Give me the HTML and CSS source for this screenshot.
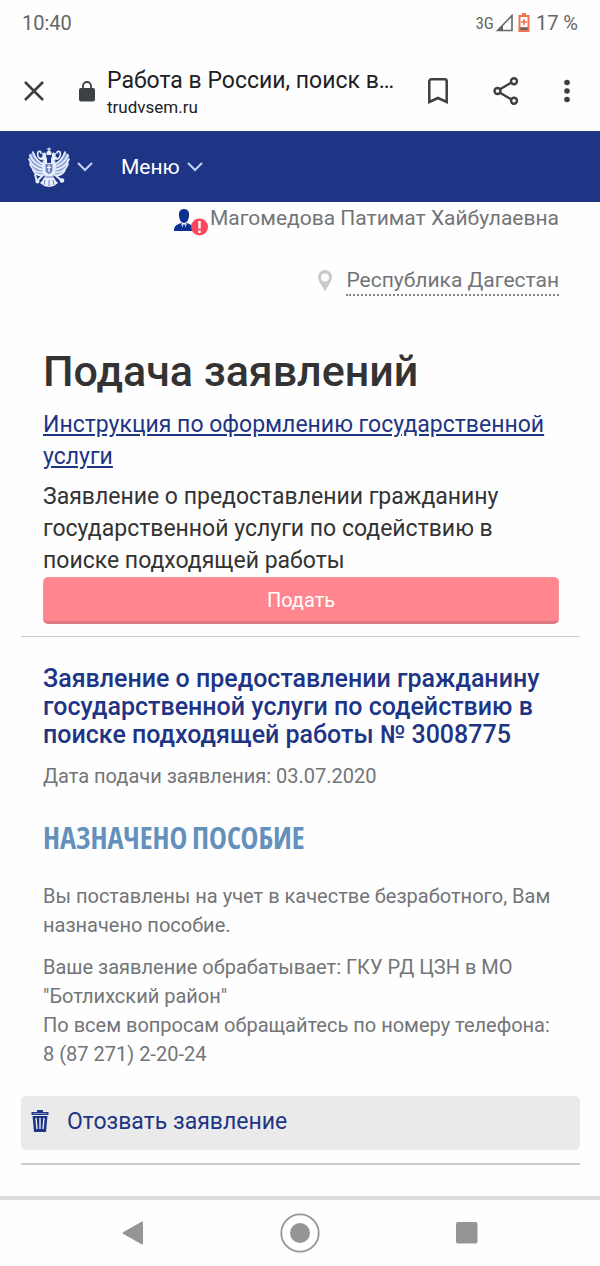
FILE: index.html
```html
<!DOCTYPE html>
<html lang="ru">
<head>
  <meta charset="UTF-8" />
  <meta name="viewport" content="width=device-width, initial-scale=1" />
  <title>Работа в России</title>
  <link rel="stylesheet" href="styles.css">
</head>
<body>

  <div class="status-bar">
    <span class="clock">10:40</span>
    <div class="status-right">
      <span class="network">3G</span>
      <svg width="17" height="18" viewBox="0 0 17 18">
        <path d="M1.5 16.5L16 1.5v15z" fill="none" stroke="#666" stroke-width="1.6"/>
        <path d="M1 17l6-6.500V17z" fill="#666"/>
      </svg>
      <svg class="battery" width="12" height="19" viewBox="0 0 12 19">
        <path d="M4 0h4v2h3.500v17H.5V2H4z" fill="#ee7350"/>
        <path d="M2.500 4h7v10h-7z" fill="#fff"/>
        <path d="M2.500 14.500h7v2.500h-7z" fill="#666"/>
        <path d="M6 6v6M3 9h6" stroke="#ee7350" stroke-width="1.6"/>
      </svg>
      <span class="clock">17 %</span>
    </div>
  </div>

  <div class="browser-bar">
    <button class="icon-button" aria-label="Закрыть">
      <svg width="20" height="20" viewBox="0 0 20 20">
        <path d="M1 1l18 18M19 1L1 19" stroke="#3c4043" stroke-width="2.6"/>
      </svg>
    </button>
    <svg class="lock" width="16" height="21" viewBox="0 0 16 21">
      <rect x="0" y="7" width="16" height="13.500" rx="2" fill="#3c4043"/>
      <path d="M4 8V5a4 4 0 0 1 8 0v3" fill="none" stroke="#3c4043" stroke-width="1.800"/>
    </svg>
    <div class="page-info">
      <div class="page-title">Работа в России, поиск в...</div>
      <div class="page-url">trudvsem.ru</div>
    </div>
    <div class="browser-actions">
      <button class="icon-button" aria-label="Закладка">
        <svg width="20" height="26" viewBox="0 0 20 26">
          <path d="M1.300 24V3.300a2 2 0 0 1 2-2h13.400a2 2 0 0 1 2 2V24L10 20z" fill="none" stroke="#3c4043" stroke-width="2.500"/>
        </svg>
      </button>
      <button class="icon-button" aria-label="Поделиться">
        <svg width="26" height="28" viewBox="0 0 26 28">
          <g fill="none" stroke="#3c4043" stroke-width="2.400">
            <path d="M7 12.300l11-6.500M7 15.700l11 6.500"/>
            <circle cx="4.500" cy="14" r="3"/>
            <circle cx="21" cy="4.300" r="3"/>
            <circle cx="21" cy="23.700" r="3"/>
          </g>
        </svg>
      </button>
      <button class="icon-button" aria-label="Ещё">
        <svg width="6" height="24" viewBox="0 0 6 24" fill="#3c4043">
          <circle cx="3" cy="3.500" r="2.800"/>
          <circle cx="3" cy="12" r="2.800"/>
          <circle cx="3" cy="20.500" r="2.800"/>
        </svg>
      </button>
    </div>
  </div>

  <header class="site-header">
    <button class="header-button" aria-label="Государственные сайты">
      <svg width="42" height="40" viewBox="0 0 42 40">
        <!-- wings -->
        <g fill="#8c9fd2">
          <path d="M17 17C12 15 8 11 5 5L1 8c0 7 2 13 5 17l6 4 6-2z"/>
          <path d="M25 17c5-2 9-6 12-12l4 3c0 7-2 13-5 17l-6 4-6-2z"/>
        </g>
        <g fill="none" stroke="#e6edfb" stroke-width="1.700" stroke-linecap="round">
          <path d="M17 18C11 16 7 11 5 5M17 20.500C10 19 4 14 2 8M17 23C10 23 3 18 1 12M17 25.500C10 26 4 23 2 17M16 28c-5 1-9-1-11-5"/>
          <path d="M25 18c6-2 10-7 12-13M25 20.500c7-1.500 13-6.500 15-12.500M25 23c7 0 14-5 16-11M25 25.500c7 .5 13-2.500 15-8.500M26 28c5 1 9-1 11-5"/>
          <path d="M13 12c-3-1-4-4-3-7 1-1 3-1 3 1M29 12c3-1 4-4 3-7-1-1-3-1-3 1"/>
        </g>
        <!-- crowns, heads and body -->
        <g fill="#e6edfb">
          <path d="M21 0l.7 1.500H23v1h-1.300V4c1.800.2 2.300 1.500 1.300 4h-4c-1-2.500-.5-3.800 1.300-4V2.500H19v-1h1.300z"/>
          <path d="M14 5.500l1.500 1 1-1.500 1 1.500 1-.5-.5 3h-3.500zM28 5.500l-1.500 1-1-1.500-1 1.500-1-.5.5 3h3.500z"/>
          <path d="M11 12l4-3h3l1 3v4h4v-4l1-3h3l4 3-4 1 1 5-1 9-6 5-6-5-1-9 1-5z"/>
          <path d="M17 29l-3 5-2 2 4 3 5 1 5-1 4-3-2-2-3-5z"/>
        </g>
        <!-- sceptre and orb -->
        <path d="M15 28l-6 6M7 27l2 8M27 28l6 5" fill="none" stroke="#e6edfb" stroke-width="2"/>
        <circle cx="9.500" cy="34.500" r="2" fill="#e6edfb"/>
        <circle cx="34" cy="33.500" r="2.300" fill="#e6edfb"/>
        <path d="M17.500 17h7v6c0 2-1.500 3-3.500 4-2-1-3.500-2-3.500-4z" fill="#6f85c4"/>
        <path d="M21 18v7M19 20.500h4" stroke="#fff" stroke-width="1.200"/>
        <path d="M17 33l-1 5M21 33v6M25 33l1 5M14 13l2 1M28 13l-2 1M16 30h10" stroke="#6f85c4" stroke-width="1"/>
      </svg>
      <svg class="chevron" width="16" height="10" viewBox="0 0 16 10">
        <path d="M1 1l7 7 7-7" fill="none" stroke="#c3d2f5" stroke-width="2"/>
      </svg>
    </button>
    <button class="header-button">
      Меню
      <svg width="16" height="10" viewBox="0 0 16 10">
        <path d="M1 1l7 7 7-7" fill="none" stroke="#c3d2f5" stroke-width="2"/>
      </svg>
    </button>
  </header>

  <main>
    <div class="user">
      <svg width="34" height="27" viewBox="0 0 34 27">
        <path d="M0 22c0-5 2-6 7-8l3 2 3-2c5 2 7 3 7 8z" fill="#0c3090"/>
        <path d="M10 0c4 0 5.500 3 5 7-.5 4-2 7-5 7s-4.500-3-5-7c-.5-4 1-7 5-7z" fill="#0c3090"/>
        <path d="M7 14.500l3 7 3-7-3 2z" fill="#fff"/>
        <path d="M9 16h2l1 6H8z" fill="#0c3090"/>
        <circle cx="25.500" cy="18" r="8.500" fill="#fa465c"/>
        <path d="M25.500 12v7.500M25.500 21.500v2.500" stroke="#fff" stroke-width="2.400"/>
      </svg>
      <span>Магомедова Патимат Хайбулаевна</span>
    </div>

    <div class="region">
      <svg width="14" height="22" viewBox="0 0 14 22">
        <path d="M7 0a7 7 0 0 0-7 7c0 5 5 9 7 15 2-6 7-10 7-15a7 7 0 0 0-7-7zm0 3.500a4 4 0 1 1 0 8 4 4 0 0 1 0-8z" fill="#c9c9c9"/>
      </svg>
      <a href="#">Республика Дагестан</a>
    </div>

    <h1>Подача заявлений</h1>
    <a class="manual" href="#">Инструкция по оформлению государственной услуги</a>
    <p>Заявление о предоставлении гражданину государственной услуги по содействию в поиске подходящей работы</p>
    <button class="submit">Подать</button>
  </main>

  <section class="application">
    <h2>Заявление о предоставлении гражданину государственной услуги по содействию в поиске подходящей работы № 3008775</h2>
    <p>Дата подачи заявления: 03.07.2020</p>
    <h3>НАЗНАЧЕНО ПОСОБИЕ</h3>
    <p>Вы поставлены на учет в качестве безработного, Вам назначено пособие.</p>
    <p>Ваше заявление обрабатывает: ГКУ РД ЦЗН в МО "Ботлихский район"<br>По всем вопросам обращайтесь по номеру телефона: 8 (87 271) 2-20-24</p>
    <button class="withdraw">
      <svg width="18" height="22" viewBox="0 0 18 22">
        <path d="M6 0h6v2h5.500v3H.5V2H6z" fill="#1e3585"/>
        <path d="M1.500 6h15L15 22H3z" fill="#1e3585"/>
        <path d="M5 8l1 11M9 8v11M13 8l-1 11" stroke="#eaeaea" stroke-width="1.400"/>
        <path d="M2 3.500h14" stroke="#7f8dbb" stroke-width="1"/>
      </svg>
      Отозвать заявление
    </button>
  </section>

  <nav class="phone-nav">
    <button class="icon-button" aria-label="Назад">
      <svg width="22" height="24" viewBox="0 0 22 24">
        <path d="M20 1.500v21L1.500 12z" fill="#959595" stroke="#959595" stroke-width="2" stroke-linejoin="round"/>
      </svg>
    </button>
    <button class="icon-button" aria-label="Домой">
      <svg width="40" height="40" viewBox="0 0 40 40">
        <circle cx="20" cy="20" r="18.700" fill="none" stroke="#959595" stroke-width="1.800"/>
        <circle cx="20" cy="20" r="10" fill="#959595"/>
      </svg>
    </button>
    <button class="icon-button" aria-label="Недавние приложения">
      <svg width="22" height="22" viewBox="0 0 22 22">
        <rect width="21.500" height="21.500" rx="2" fill="#959595"/>
      </svg>
    </button>
  </nav>

</body>
</html>
```
FILE: styles.css
```css
* {
  box-sizing: border-box;
}

body {
  margin: 0;
  min-height: 100vh;
  display: flex;
  flex-direction: column;
  background: #fefefe;
  color: #333;
  font-family: Roboto, sans-serif;
  font-size: 23px;
  line-height: 32px;
}

h1, h2, h3, p {
  margin: 0;
}

svg {
  display: block;
  flex: none;
}

button {
  padding: 0;
  border: none;
  background: none;
  font: inherit;
  cursor: pointer;
}

/* phone status bar */
.status-bar {
  display: flex;
  align-items: center;
  justify-content: space-between;
  height: 45px;
  padding: 0 22px;
  color: #666;
}

.clock {
  font-size: 20px;
}

.status-right {
  display: flex;
  align-items: center;
  gap: 2px;
}

.network {
  font-family: "Roboto Condensed", Roboto, sans-serif;
  font-size: 17px;
}

.battery {
  margin: 0 4px 0 3px;
}

/* browser toolbar */
.browser-bar {
  display: flex;
  align-items: center;
  height: 86px;
  padding: 6px 30px 0 24px;
}

.lock {
  margin: 0 12px 0 35px;
}

.page-info {
  flex: 1;
  min-width: 0;
  padding-top: 4px;
  color: #202124;
}

.page-title {
  overflow: hidden;
  white-space: nowrap;
  text-overflow: ellipsis;
  line-height: 28px;
}

.page-url {
  font-size: 17px;
  line-height: 24px;
}

.browser-actions {
  display: flex;
  align-items: center;
  gap: 45px;
  margin-left: 32px;
}

/* site header */
.site-header {
  display: flex;
  align-items: center;
  gap: 28px;
  height: 71px;
  padding: 0 28px;
  background: #1e3585;
}

.header-button {
  display: flex;
  align-items: center;
  gap: 7px;
  color: #fff;
  font-size: 21px;
}

/* content */
main {
  padding: 0 41px 12px 43px;
}

.user, .region {
  display: flex;
  justify-content: flex-end;
  color: #727578;
  font-size: 21px;
}

.user {
  gap: 2px;
}

.user svg {
  margin-top: 7px;
}

.region {
  align-items: center;
  gap: 14px;
  margin-top: 30px;
}

.region a {
  border-bottom: 2px dotted #85888b;
  line-height: 28px;
  color: inherit;
  text-decoration: none;
}

h1 {
  margin-top: 51px;
  font-size: 43px;
  font-weight: 500;
  line-height: 48px;
}

.manual {
  display: block;
  margin: 14px 0 8px;
  color: #1e3585;
}

.submit {
  display: block;
  width: 100%;
  height: 47px;
  border: 1px solid #f59499;
  border-bottom: 3px solid #dd7a82;
  border-radius: 5px;
  background: #ff868f;
  color: #fff;
  font-size: 20px;
}

.application {
  margin: 0 20px 0 21px;
  padding: 28px 22px 13px;
  border-top: 1px solid #ccc;
  border-bottom: 2px solid #ccc;
  color: #727578;
  font-size: 20px;
  line-height: 29px;
}

h2 {
  color: #1e3585;
  font-size: 25px;
  font-weight: 500;
  line-height: 28px;
}

.application p {
  margin-top: 13px;
}

h3 {
  margin: 29px 0 22px;
  color: #6391bc;
  font-family: "Bebas Neue", "Noto Sans ExtraCondensed", "Open Sans Condensed", "Roboto Condensed", sans-serif;
  font-size: 30px;
  font-weight: 700;
  line-height: 40px;
}

.withdraw {
  display: flex;
  align-items: center;
  gap: 18px;
  width: calc(100% + 44px);
  height: 54px;
  margin: 27px -22px 0;
  padding: 0 10px 4px;
  border-radius: 5px;
  background: #eaeaea;
  color: #1e3585;
  font-size: 23px;
}

/* phone navigation */
.phone-nav {
  display: flex;
  align-items: center;
  justify-content: space-between;
  height: 70px;
  margin-top: auto;
  padding: 0 122px;
  border-top: 4px solid #dcdcdc;
}
```
